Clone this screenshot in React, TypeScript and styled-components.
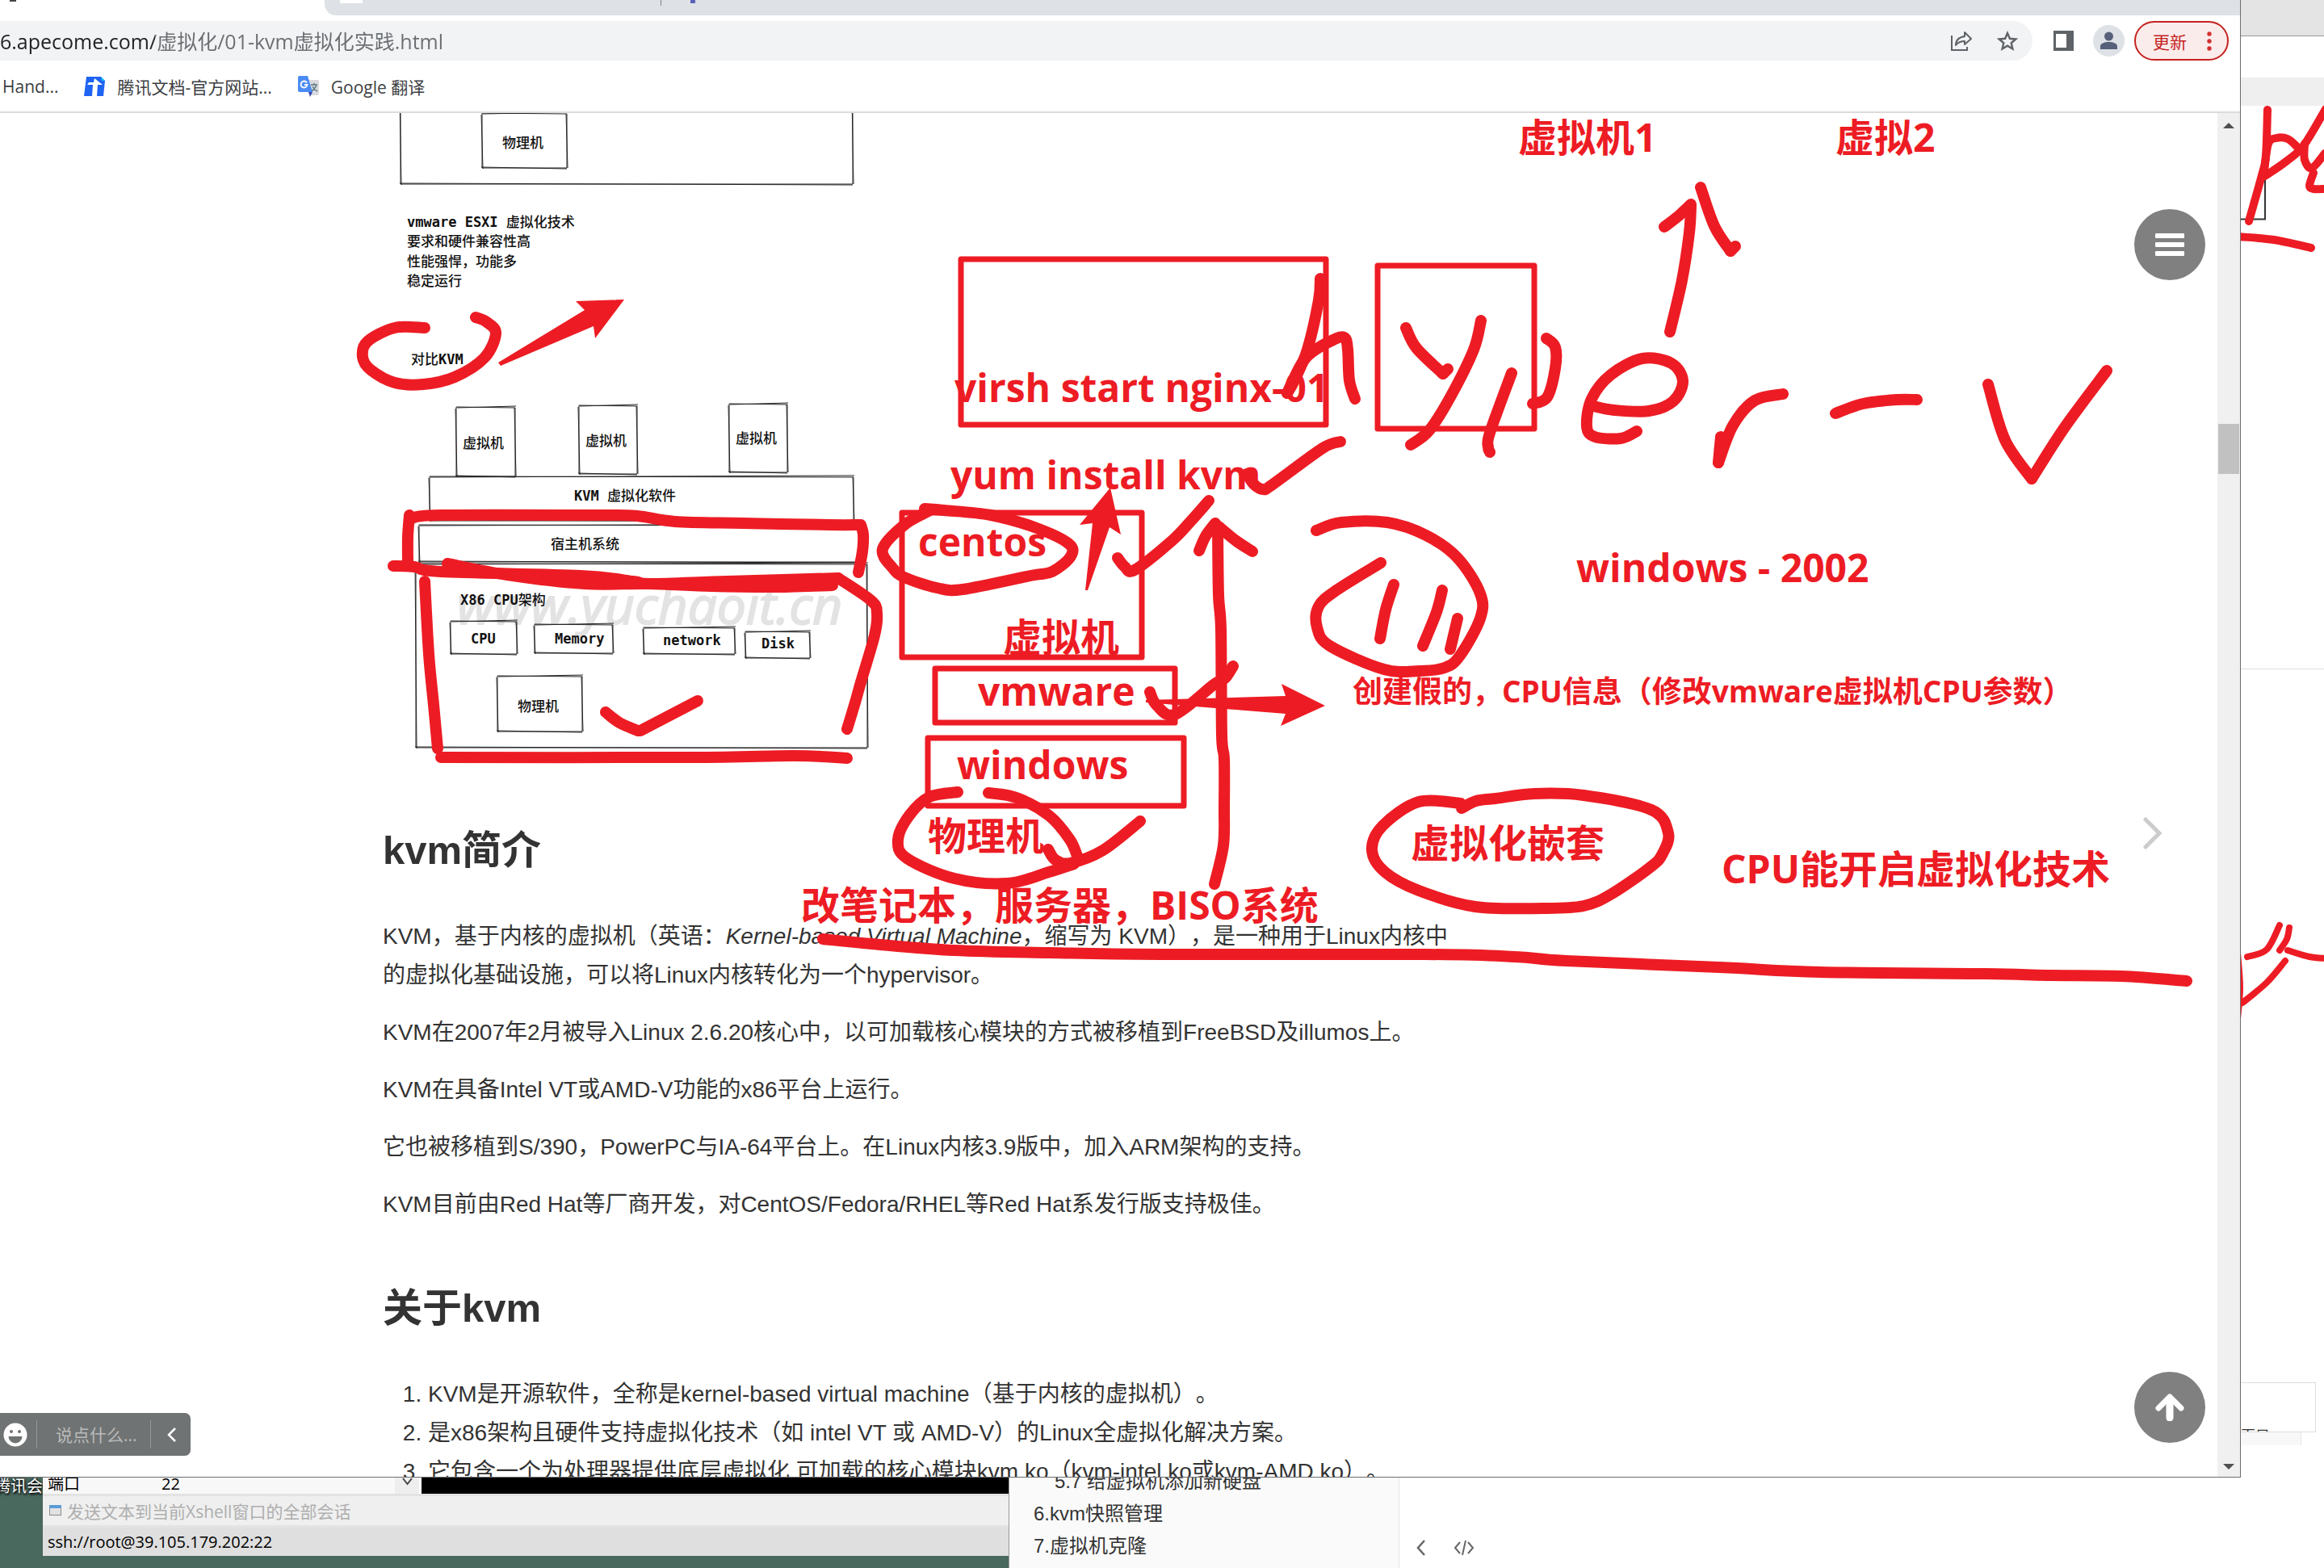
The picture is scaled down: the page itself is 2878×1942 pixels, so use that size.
import React from 'react';
import styled, { createGlobalStyle } from 'styled-components';

const RED = '#ed1c24';
const UI_FONT = `"Open Sans", "Noto Sans CJK SC", sans-serif`;
const DOC_FONT = `"Liberation Sans", "Noto Sans CJK SC", sans-serif`;
const SKETCH_FONT = `"DejaVu Sans Mono", "Noto Sans CJK SC", monospace`;

const GlobalStyle = createGlobalStyle`
  * { box-sizing: border-box; }
  body { margin: 0; background: #49685e; text-spacing-trim: space-all; }
  button, input { font: inherit; color: inherit; border: 0; background: none; padding: 0; margin: 0; outline: none; }
  button { cursor: pointer; display: flex; align-items: center; justify-content: center; }
  svg { display: block; flex: none; }
`;

/* ---------- desktop ---------- */

const Desktop = styled.div`
  display: flex;
  flex-direction: column;
  height: 100vh;
  overflow: hidden;
  font-family: ${UI_FONT};
`;

const UpperRow = styled.div`
  display: flex;
  flex: 1;
  min-height: 0;
`;

const Browser = styled.main`
  display: flex;
  flex-direction: column;
  flex: 1;
  min-width: 0;
  background: #fff;
  border-right: 1px solid #6b6d70;
  border-bottom: 1px solid #6b6d70;
`;

/* ---------- tab strip, toolbar, bookmarks ---------- */

const TabStrip = styled.div`
  display: flex;
  align-items: flex-start;
  height: 19px;
  padding-left: 12px;
  overflow: hidden;
  flex: none;
`;

const ActiveIcon = styled.span`
  width: 8px;
  height: 2px;
  margin-right: 382px;
  background: #444;
`;

const InactiveTabs = styled.div`
  display: flex;
  align-items: flex-start;
  flex: 1;
  height: 19px;
  padding-left: 19px;
  background: #dee1e6;
  border-bottom-left-radius: 14px;
`;

const Favicon = styled.span<{ $width: number; $color: string }>`
  width: ${(p) => p.$width}px;
  height: 4px;
  background: ${(p) => p.$color};
`;

const TabDivider = styled.span`
  width: 1px;
  height: 7px;
  margin: 0 36px 0 369px;
  background: #80848a;
`;

const Toolbar = styled.div`
  display: flex;
  align-items: center;
  height: 63px;
  padding-right: 14px;
  flex: none;
`;

const Omnibox = styled.div`
  display: flex;
  align-items: center;
  gap: 30px;
  flex: 1;
  height: 49px;
  padding-right: 18px;
  background: #f1f3f4;
  border-radius: 0 25px 25px 0;
  color: #5f6368;
`;

const UrlInput = styled.input`
  flex: 1;
  min-width: 0;
  height: 49px;
  padding-bottom: 2px;
  font-size: 25px;
  background: linear-gradient(90deg, #202124 192px, #6a6d71 192px);
  background-clip: text;
  -webkit-background-clip: text;
  color: transparent;
`;

const ToolbarButton = styled.button<{ $gap: number }>`
  margin-left: ${(p) => p.$gap}px;
  color: #5f6368;
`;

const UpdateButton = styled.button`
  justify-content: flex-start;
  gap: 25px;
  width: 117px;
  height: 49px;
  margin-left: 12px;
  padding-left: 21px;
  border: 2px solid #c5221f;
  border-radius: 25px;
  background: #faeceb;
  color: #c5221f;
  font-size: 21px;
`;

const BookmarkBar = styled.nav`
  display: flex;
  align-items: center;
  height: 58px;
  padding: 0 0 6px 3px;
  border-bottom: 2px solid #dcdcdc;
  font-size: 21px;
  color: #3c4043;
  flex: none;
`;

const Bookmark = styled.a`
  display: flex;
  align-items: center;
  gap: 15px;
  margin-right: 32px;
  color: inherit;
  text-decoration: none;
`;

/* ---------- page ---------- */

const Viewport = styled.div`
  position: relative;
  display: flex;
  flex: 1;
  min-height: 0;
  overflow: hidden;
`;

const Page = styled.div`
  flex: 1;
  min-width: 0;
  padding-left: 474px;
  overflow: hidden;
`;

const Article = styled.article`
  max-width: 1342px;
  font-family: ${DOC_FONT};
  font-size: 28px;
  line-height: 48px;
  color: #333;

  h2 {
    margin: 62px 0 41px;
    font-size: 49px;
    line-height: 84px;
  }
  p { margin: 0 0 23px; }
  ol { margin: 0; padding-left: 56px; }
  li { white-space: nowrap; }
`;

const Scrollbar = styled.div`
  display: flex;
  flex-direction: column;
  align-items: center;
  width: 28px;
  padding: 12px 0 9px;
  background: #f0f0f0;
`;

const Thumb = styled.div`
  width: 26px;
  height: 62px;
  margin: 366px 0 auto;
  background: #c1c1c1;
`;

const Overlay = styled.svg`
  position: absolute;
  left: 0;
  top: 0;
  pointer-events: none;
`;

const RoundButton = styled.button<{ $edge: 'top' | 'bottom' }>`
  position: absolute;
  right: 43px;
  ${(p) => (p.$edge === 'top' ? 'top: 119px;' : 'bottom: 42px;')}
  width: 88px;
  height: 88px;
  border-radius: 50%;
  background: #808080;
`;

const NextButton = styled.button`
  position: absolute;
  right: 94px;
  top: 870px;
`;

const CommentBox = styled.form`
  position: absolute;
  left: 0;
  bottom: 26px;
  display: flex;
  align-items: center;
  width: 236px;
  height: 53px;
  padding-left: 4px;
  border-radius: 0 7px 7px 0;
  background: #707373;
  color: #b9bbbb;
  font-size: 21px;

  input { width: 117px; }
  input::placeholder { color: #b9bbbb; opacity: 1; }
`;

const CommentDivider = styled.span<{ $before: number; $after: number }>`
  width: 1px;
  height: 35px;
  margin: 0 ${(p) => p.$after}px 0 ${(p) => p.$before}px;
  background: #969898;
`;

/* ---------- window behind, right edge ---------- */

const BackWindow = styled.aside`
  position: relative;
  display: flex;
  flex-direction: column;
  width: 103px;
  background: #fff;
  overflow: hidden;
`;

const BackTitle = styled.div`
  height: 45px;
  background: #e4e4e4;
  border-bottom: 1px solid #999;
  flex: none;
`;

const BackTools = styled.div`
  height: 86px;
  border-bottom: 35px solid #efefef;
  flex: none;
`;

const BackPage = styled.div`
  height: 698px;
  border-bottom: 1px solid #ddd;
  flex: none;
`;

const BackPanel = styled.div`
  width: 93px;
  height: 62px;
  margin-top: auto;
  padding-top: 54px;
  overflow: hidden;
  border: 1px solid #ddd;
  border-left: 0;
  font-size: 18px;
  line-height: 22px;
  color: #333;
  flex: none;
`;

const BackFooter = styled.div`
  width: 75px;
  height: 16px;
  margin-bottom: 40px;
  background: #f8f8f8;
  border-right: 1px solid #e5e5e5;
  flex: none;
`;

/* ---------- bottom row ---------- */

const LowerRow = styled.div`
  display: flex;
  height: 112px;
  overflow: hidden;
  flex: none;
`;

const DesktopLabel = styled.div`
  display: flex;
  justify-content: flex-end;
  width: 53px;
  overflow: hidden;
  font-size: 20px;
  line-height: 22px;
  color: #fff;
  white-space: nowrap;
  text-shadow: 1px 2px 3px #000, 0 0 3px #000;
`;

const Terminal = styled.section`
  display: flex;
  flex-direction: column;
  width: 1196px;
  padding-bottom: 15px;
  font-size: 20px;
  background: #49685e;
`;

const SessionRow = styled.div`
  display: flex;
  height: 20px;
  line-height: 16px;
  background: #000;
  color: #000;
`;

const SessionField = styled.div`
  display: flex;
  width: 436px;
  padding-left: 6px;
  background: #f8f8f8;

  dl { display: flex; margin: 0; }
  dt { width: 141px; }
  dd { margin: 0; }
`;

const SessionScroll = styled.div`
  display: flex;
  justify-content: center;
  width: 33px;
  background: #eee;
  border-right: 3px solid #fff;
`;

const SendRow = styled.label`
  display: flex;
  align-items: center;
  gap: 7px;
  height: 43px;
  padding-left: 8px;
  background: #efefef;
  border: solid #e3e3e3;
  border-width: 3px 0;
  font-size: 21px;

  input { flex: 1; padding-top: 2px; }
  input::placeholder { color: #aeaeae; opacity: 1; }
`;

const StatusRow = styled.div`
  flex: 1;
  padding-left: 6px;
  line-height: 35px;
  background: #dfdfdf;
  color: #000;
`;

const Contents = styled.nav`
  display: flex;
  flex-direction: column;
  justify-content: flex-end;
  width: 484px;
  padding: 0 0 7px 30px;
  background: #fafafa;
  border-left: 1px solid #999;
  border-right: 1px solid #e6e6e6;
  font-family: ${DOC_FONT};
  font-size: 24px;
  line-height: 40px;
`;

const ContentsLink = styled.a<{ $nested?: boolean }>`
  padding-left: ${(p) => (p.$nested ? 26 : 0)}px;
  color: #333;
  text-decoration: none;
  flex: none;
`;

const BackArticle = styled.div`
  display: flex;
  flex: 1;
  align-items: flex-end;
  gap: 34px;
  padding: 0 0 14px 21px;
  background: #fff;
`;

/* ---------- hand-drawn diagram ---------- */

type Box = [number, number, number, number];

const sketchBoxes: Box[] = [
  [496, 120, 1056, 228],
  [597, 140, 702, 208],
  [565, 504, 638, 590],
  [717, 502, 789, 587],
  [903, 500, 975, 585],
  [532, 590, 1057, 645],
  [519, 650, 1071, 696],
  [515, 698, 1074, 926],
  [558, 769, 640, 810],
  [662, 773, 759, 809],
  [797, 777, 910, 810],
  [923, 782, 1003, 815],
  [616, 837, 721, 906],
];

const sketchTexts: [number, number, string][] = [
  [622, 183, '物理机'],
  [504, 281, 'vmware ESXI 虚拟化技术'],
  [504, 305, '要求和硬件兼容性高'],
  [504, 330, '性能强悍，功能多'],
  [504, 354, '稳定运行'],
  [509, 451, '对比KVM'],
  [573, 555, '虚拟机'],
  [725, 552, '虚拟机'],
  [911, 549, '虚拟机'],
  [711, 620, 'KVM 虚拟化软件'],
  [682, 680, '宿主机系统'],
  [570, 749, 'X86 CPU架构'],
  [583, 797, 'CPU'],
  [687, 797, 'Memory'],
  [821, 799, 'network'],
  [943, 803, 'Disk'],
  [641, 881, '物理机'],
];

const SketchText = styled.text`
  font-family: ${SKETCH_FONT};
  font-size: 17px;
  font-weight: 500;
  fill: #111;
  white-space: pre;
`;

const Latin = styled.tspan`
  font-weight: 700;
`;

const Watermark = styled.text`
  font-family: "Open Sans", sans-serif;
  font-style: italic;
  font-size: 64px;
  fill: #e3e3e3;
  stroke: #e3e3e3;
  stroke-width: 2px;
`;

function SketchBox({ box: [l, t, r, b] }: { box: Box }) {
  return (
    <path
      d={`M${l} ${t}L${r} ${t + 1}L${r} ${b}L${l} ${b}ZM${l + 1} ${t + 1}L${r + 1} ${t - 1}M${l - 1} ${b - 1}L${r} ${b + 1}M${l + 1} ${b + 1}L${l - 1} ${t + 2}M${r - 1} ${t + 1}L${r + 1} ${b}`}
    />
  );
}

function Diagram() {
  return (
    <svg width="640" height="809" viewBox="474 140 640 809" role="img" aria-label="KVM">
      <Watermark x="566" y="773">www.yuchaoit.cn</Watermark>
      <g fill="none" stroke="#222" strokeWidth="1">
        {sketchBoxes.map((box) => (
          <SketchBox key={box.join()} box={box} />
        ))}
      </g>
      {sketchTexts.map(([x, y, text]) => (
        <SketchText key={`${x}-${y}`} x={x} y={y}>
          {text.split(/([\x20-\x7e]+)/).map((run, i) =>
            i % 2 ? <Latin key={i}>{run}</Latin> : run,
          )}
        </SketchText>
      ))}
    </svg>
  );
}

/* ---------- red pen ---------- */

type Point = [number, number];

/* Smooth curve through every point of a pen stroke. */
function curve(p: Point[]): string {
  let d = `M${p[0][0]} ${p[0][1]}`;
  for (let i = 0; i < p.length - 1; i++) {
    const a = p[i - 1] ?? p[i];
    const b = p[i];
    const c = p[i + 1];
    const e = p[i + 2] ?? c;
    d += `C${b[0] + (c[0] - a[0]) / 6} ${b[1] + (c[1] - a[1]) / 6} ${c[0] - (e[0] - b[0]) / 6} ${c[1] - (e[1] - b[1]) / 6} ${c[0]} ${c[1]}`;
  }
  return d;
}

const penStrokes: Point[][] = [
  [[526, 406], [489, 406], [455, 423], [449, 442], [459, 458], [489, 474], [524, 476], [563, 467], [600, 443], [614, 413], [603, 399], [589, 393]],
  [[507, 638], [505, 665], [505, 696]],
  [[509, 642], [546, 638], [741, 638], [789, 639], [836, 646], [919, 648], [1027, 650], [1064, 650]],
  [[1066, 650], [1069, 662], [1068, 683], [1063, 709]],
  [[487, 701], [513, 702], [546, 708], [719, 713], [784, 720], [806, 723], [901, 720], [1038, 716]],
  [[1038, 716], [1079, 744], [1086, 760], [1083, 787], [1066, 845], [1059, 870], [1049, 903]],
  [[554, 698], [628, 712], [724, 723], [802, 723], [880, 726], [962, 727], [1031, 725]],
  [[526, 720], [531, 810], [537, 873], [542, 927]],
  [[546, 938], [854, 938], [984, 936], [1049, 939]],
  [[750, 882], [767, 895], [790, 905]],
  [[793, 905], [864, 868]],
  [[1145, 630], [1169, 632], [1227, 638], [1281, 653], [1323, 673], [1326, 689], [1303, 708], [1276, 713], [1192, 730], [1160, 728], [1120, 715], [1105, 703], [1093, 680], [1120, 650], [1150, 633]],
  [[1544, 587], [1553, 600], [1564, 606], [1576, 600], [1638, 555], [1660, 547]],
  [[1384, 691], [1393, 702], [1405, 706], [1451, 670], [1475, 645], [1497, 620]],
  [[1508, 654], [1509, 737], [1512, 780], [1513, 910], [1516, 940], [1516, 1000], [1515, 1047], [1504, 1095]],
  [[1485, 682], [1493, 664], [1505, 648]],
  [[1509, 652], [1531, 670], [1551, 683]],
  [[1635, 345], [1633, 372], [1619, 433], [1603, 471], [1594, 487]],
  [[1594, 487], [1611, 452], [1625, 436], [1651, 421], [1665, 418], [1669, 433], [1671, 471], [1678, 494]],
  [[1741, 406], [1754, 431], [1787, 463]],
  [[1787, 463], [1793, 457]],
  [[1834, 397], [1825, 433], [1797, 490], [1770, 533], [1747, 551]],
  [[1872, 462], [1845, 536], [1843, 554], [1845, 560]],
  [[1915, 419], [1926, 430], [1926, 456], [1916, 492], [1898, 500]],
  [[1973, 503], [1999, 508], [2042, 509], [2072, 497], [2084, 472], [2070, 450], [2034, 444], [1995, 464], [1971, 494], [1965, 528], [1975, 541], [2007, 543], [2027, 534]],
  [[2094, 255], [2092, 288], [2083, 347], [2068, 411]],
  [[2061, 281], [2078, 268], [2094, 253]],
  [[2106, 232], [2123, 280], [2143, 311]],
  [[2143, 311], [2149, 305]],
  [[2131, 541], [2128, 573]],
  [[2128, 573], [2146, 527], [2173, 496], [2208, 488]],
  [[2273, 512], [2307, 500], [2349, 495], [2374, 495]],
  [[2462, 476], [2483, 545], [2516, 593]],
  [[2516, 593], [2557, 529], [2609, 459]],
  [[1630, 657], [1661, 647], [1718, 647], [1766, 663], [1805, 691], [1833, 735], [1833, 766], [1808, 812], [1789, 827], [1758, 831], [1714, 829], [1647, 800], [1631, 777], [1633, 751], [1655, 731], [1710, 697]],
  [[1726, 724], [1716, 755], [1709, 791]],
  [[1786, 731], [1779, 758], [1762, 800]],
  [[1805, 766], [1796, 804]],
  [[1424, 857], [1432, 873], [1455, 885], [1503, 848], [1517, 840], [1527, 825]],
  [[1186, 981], [1151, 987], [1126, 1010], [1112, 1040], [1123, 1063], [1182, 1088], [1248, 1094], [1299, 1080], [1330, 1070]],
  [[1224, 982], [1259, 988], [1299, 1010], [1325, 1040], [1335, 1063]],
  [[1298, 1052], [1307, 1065], [1325, 1069], [1366, 1053], [1412, 1017]],
  [[1810, 1001], [1828, 992], [1852, 989], [1900, 983], [1961, 985], [2045, 1003], [2066, 1032], [2059, 1057], [2045, 1073], [1996, 1107], [1961, 1122], [1911, 1125], [1827, 1123], [1757, 1103], [1715, 1080], [1699, 1053], [1712, 1023], [1757, 993], [1809, 995]],
  [[1019, 1163], [1080, 1169], [1182, 1177], [1300, 1180], [1437, 1182], [1764, 1182], [1876, 1185], [1940, 1190], [2129, 1198], [2255, 1204], [2459, 1206], [2536, 1208], [2627, 1209], [2708, 1215]],
];

const penBoxes: Box[] = [
  [1190, 321, 1642, 526],
  [1117, 635, 1414, 814],
  [1158, 828, 1455, 895],
  [1149, 914, 1466, 998],
  [1706, 329, 1900, 531],
];

const penArrows = [
  '773,371 713,373 724,384 617,449 620,453 735,404 737,419',
  '1375,604 1337,650 1353,648 1344,731 1347,731 1374,653 1388,662',
  '1641,874 1587,847 1592,862 1419,867 1419,870 1592,884 1586,899',
];

const penNotes: { x: number; y: number; text: string; small?: boolean }[] = [
  { x: 1880, y: 188, text: '虚拟机1' },
  { x: 2273, y: 188, text: '虚拟2' },
  { x: 1182, y: 498, text: 'virsh start nginx-01' },
  { x: 1177, y: 606, text: 'yum install kvm' },
  { x: 1137, y: 689, text: 'centos' },
  { x: 1242, y: 807, text: '虚拟机' },
  { x: 1211, y: 874, text: 'vmware' },
  { x: 1185, y: 965, text: 'windows' },
  { x: 1149, y: 1053, text: '物理机' },
  { x: 992, y: 1139, text: '改笔记本，服务器，BISO系统' },
  { x: 1952, y: 721, text: 'windows - 2002' },
  { x: 1675, y: 870, text: '创建假的，CPU信息（修改vmware虚拟机CPU参数）', small: true },
  { x: 1747, y: 1062, text: '虚拟化嵌套' },
  { x: 2132, y: 1094, text: 'CPU能开启虚拟化技术' },
];

const Note = styled.text<{ $small?: boolean }>`
  font-family: ${UI_FONT};
  font-weight: 700;
  font-size: ${(p) => (p.$small ? 37 : 48)}px;
  fill: ${RED};
`;

function RedPen() {
  return (
    <Overlay width="2746" height="1689" viewBox="0 140 2746 1689">
      {penNotes.map((n) => (
        <Note key={n.text + n.y} x={n.x} y={n.y} $small={n.small}>
          {n.text}
        </Note>
      ))}
      <g fill="none" stroke={RED} strokeLinecap="round" strokeLinejoin="round">
        {penBoxes.map(([l, t, r, b]) => (
          <rect key={`${l}-${t}`} x={l} y={t} width={r - l} height={b - t} strokeWidth="7" />
        ))}
        {penStrokes.map((s, i) => (
          <path key={i} d={curve(s)} strokeWidth="14" />
        ))}
      </g>
      {penArrows.map((a) => (
        <polygon key={a} points={a} fill={RED} />
      ))}
    </Overlay>
  );
}

const backStrokes: Point[][] = [
  [[33, 136], [31, 193], [26, 217], [10, 274]],
  [[30, 218], [56, 200], [78, 180], [105, 135]],
  [[29, 212], [34, 178], [44, 171], [58, 172], [70, 182]],
  [[79, 178], [79, 198], [88, 208], [104, 190]],
  [[90, 214], [85, 230], [90, 234], [105, 234]],
  [[-4, 293], [41, 297], [87, 307]],
];

const backThinStrokes: Point[][] = [
  [[8, 1185], [32, 1176], [48, 1146]],
  [[60, 1149], [57, 1163], [48, 1177]],
  [[58, 1177], [85, 1185], [105, 1187]],
  [[2, 1242], [32, 1217], [55, 1190]],
  [[-4, 1180], [-1, 1223], [-4, 1262]],
];

function BackPen() {
  return (
    <Overlay width="103" height="1400" viewBox="0 0 103 1400">
      <path d="M0 271.500H30V190" fill="none" stroke="#333" strokeWidth="2" />
      <g fill="none" stroke={RED} strokeLinecap="round" strokeLinejoin="round">
        {backStrokes.map((s, i) => (
          <path key={i} d={curve(s)} strokeWidth="10" />
        ))}
        {backThinStrokes.map((s, i) => (
          <path key={i} d={curve(s)} strokeWidth="8" />
        ))}
      </g>
    </Overlay>
  );
}

/* ---------- icons ---------- */

const ShareIcon = () => (
  <svg width="27" height="26" viewBox="0 0 27 26" fill="none" stroke="currentColor" strokeWidth="2">
    <path d="M1 6V24H20V20" />
    <path d="M17 2V7C10 8 6 12 6 18C9 14 12 13 17 13V17L25 10Z" strokeLinejoin="round" />
  </svg>
);

const StarIcon = () => (
  <svg width="26" height="26" viewBox="0 0 26 26" fill="none" stroke="currentColor" strokeWidth="2.400">
    <path d="M13 3L15.900 9.800L23.300 10.500L17.700 15.300L19.400 22.500L13 18.700L6.600 22.500L8.300 15.300L2.700 10.500L10.100 9.800Z" />
  </svg>
);

const PanelIcon = () => (
  <svg width="25" height="25" viewBox="0 0 25 25">
    <path fill="currentColor" fillRule="evenodd" d="M0 0H25V25H0ZM3 4V21H16V4Z" />
  </svg>
);

const AvatarIcon = () => (
  <svg width="39" height="39" viewBox="0 0 39 39">
    <circle cx="19.500" cy="19.500" r="19.500" fill="#dee1e6" />
    <circle cx="19.500" cy="14" r="5.500" fill="#56607a" />
    <path d="M9 30V26C9 23 14 21 19.500 21S30 23 30 26V30Z" fill="#56607a" />
  </svg>
);

const DotsIcon = () => (
  <svg width="6" height="24" viewBox="0 0 6 24" fill="#d32f2f">
    <circle cx="3" cy="3" r="2.700" />
    <circle cx="3" cy="12" r="2.700" />
    <circle cx="3" cy="21" r="2.700" />
  </svg>
);

const DocsIcon = () => (
  <svg width="26" height="24" viewBox="0 0 26 24">
    <path d="M3 0H21L26 5L24 24H0Z" fill="#1f63f2" />
    <path d="M21 0L26 5H22Z" fill="#16c8f5" />
    <path d="M13 2L23 10H17L16 24H10L11 10H4L6 7H12Z" fill="#fff" />
  </svg>
);

const TranslateIcon = () => (
  <svg width="26" height="26" viewBox="0 0 26 26">
    <path d="M11 5H24Q26 5 26 7V22Q26 24 24 24H15Z" fill="#d9dadd" />
    <path d="M16 11H24M20 9V11M23 11Q21 17 16 19M18 13Q20 17 24 19" fill="none" stroke="#5f7a86" strokeWidth="1.500" />
    <path d="M2 0H12L18 20H2Q0 20 0 18V2Q0 0 2 0Z" fill="#4b8bf5" />
    <path d="M13 20H18L15 26Z" fill="#3848b5" />
    <path d="M11 8.500A4 4 0 1 0 11.500 11H8" fill="none" stroke="#fff" strokeWidth="1.800" />
  </svg>
);

const MenuIcon = () => (
  <svg width="36" height="28" viewBox="0 0 36 28" fill="#fff">
    <rect width="36" height="6" rx="1" />
    <rect y="11" width="36" height="6" rx="1" />
    <rect y="22" width="36" height="6" rx="1" />
  </svg>
);

const UpIcon = () => (
  <svg width="40" height="34" viewBox="0 0 40 34" fill="none" stroke="#fff" strokeWidth="7">
    <path d="M20 30V8" strokeWidth="9" strokeLinecap="round" />
    <path d="M6 18L20 4L34 18" strokeLinecap="round" strokeLinejoin="round" />
  </svg>
);

const SmileIcon = () => (
  <svg width="30" height="30" viewBox="0 0 30 30">
    <circle cx="15" cy="15" r="14.500" fill="#fff" />
    <circle cx="10" cy="11" r="2" fill="#707373" />
    <circle cx="20" cy="11" r="2" fill="#707373" />
    <path d="M6.500 17H23.500A8.500 8.500 0 0 1 6.500 17Z" fill="#707373" />
  </svg>
);

const FormIcon = () => (
  <svg width="15" height="13" viewBox="0 0 15 13">
    <rect x="0.500" y="0.500" width="14" height="12" fill="#e2e2e2" stroke="#8a8a8a" />
    <rect width="15" height="4" fill="#5a9bd5" />
  </svg>
);

export default function App() {
  return (
    <Desktop>
      <GlobalStyle />
      <UpperRow>
        <Browser>
          <TabStrip>
            <ActiveIcon />
            <InactiveTabs>
              <Favicon $width={28} $color="#fff" />
              <TabDivider />
              <Favicon $width={6} $color="#5a62b8" />
            </InactiveTabs>
          </TabStrip>
          <Toolbar>
            <Omnibox>
              <UrlInput aria-label="地址" defaultValue="6.apecome.com/虚拟化/01-kvm虚拟化实践.html" />
              <button aria-label="分享"><ShareIcon /></button>
              <button aria-label="收藏"><StarIcon /></button>
            </Omnibox>
            <ToolbarButton $gap={26} aria-label="侧边栏"><PanelIcon /></ToolbarButton>
            <ToolbarButton $gap={24} aria-label="用户"><AvatarIcon /></ToolbarButton>
            <UpdateButton>更新<DotsIcon /></UpdateButton>
          </Toolbar>
          <BookmarkBar>
            <Bookmark href="#">Hand...</Bookmark>
            <Bookmark href="#"><DocsIcon />腾讯文档-官方网站...</Bookmark>
            <Bookmark href="#"><TranslateIcon />Google 翻译</Bookmark>
          </BookmarkBar>
          <Viewport>
            <Page>
              <Article>
                <Diagram />
                <h2>kvm简介</h2>
                <p>
                  KVM，基于内核的虚拟机（英语：<em>Kernel-based Virtual Machine</em>，缩写为 KVM），是一种用于Linux内核中的虚拟化基础设施，可以将Linux内核转化为一个hypervisor。
                </p>
                <p>KVM在2007年2月被导入Linux 2.6.20核心中，以可加载核心模块的方式被移植到FreeBSD及illumos上。</p>
                <p>KVM在具备Intel VT或AMD-V功能的x86平台上运行。</p>
                <p>它也被移植到S/390，PowerPC与IA-64平台上。在Linux内核3.9版中，加入ARM架构的支持。</p>
                <p>KVM目前由Red Hat等厂商开发，对CentOS/Fedora/RHEL等Red Hat系发行版支持极佳。</p>
                <h2>关于kvm</h2>
                <ol>
                  <li>KVM是开源软件，全称是kernel-based virtual machine（基于内核的虚拟机）。</li>
                  <li>是x86架构且硬件支持虚拟化技术（如 intel VT 或 AMD-V）的Linux全虚拟化解决方案。</li>
                  <li>它包含一个为处理器提供底层虚拟化,可加载的核心模块kvm.ko（kvm-intel.ko或kvm-AMD.ko）。</li>
                </ol>
              </Article>
            </Page>
            <Scrollbar>
              <svg width="14" height="7" viewBox="0 0 14 7"><path d="M7 0L14 7H0Z" fill="#505050" /></svg>
              <Thumb />
              <svg width="14" height="7" viewBox="0 0 14 7"><path d="M0 0H14L7 7Z" fill="#505050" /></svg>
            </Scrollbar>
            <RedPen />
            <RoundButton $edge="top" aria-label="目录"><MenuIcon /></RoundButton>
            <NextButton aria-label="下一页">
              <svg width="28" height="44" viewBox="0 0 28 44" fill="none" stroke="#ccc" strokeWidth="5" strokeLinecap="round">
                <path d="M5 5L22 22L5 39" />
              </svg>
            </NextButton>
            <RoundButton $edge="bottom" aria-label="返回顶部"><UpIcon /></RoundButton>
            <CommentBox>
              <SmileIcon />
              <CommentDivider $before={11} $after={23} />
              <input aria-label="评论" placeholder="说点什么..." />
              <CommentDivider $before={0} $after={20} />
              <button type="button" aria-label="收起">
                <svg width="12" height="18" viewBox="0 0 12 18" fill="none" stroke="#fff" strokeWidth="2.500">
                  <path d="M10 1L2 9L10 17" />
                </svg>
              </button>
            </CommentBox>
          </Viewport>
        </Browser>
        <BackWindow>
          <BackTitle />
          <BackTools />
          <BackPage />
          <BackPanel>页目</BackPanel>
          <BackFooter />
          <BackPen />
        </BackWindow>
      </UpperRow>
      <LowerRow>
        <DesktopLabel>腾讯会</DesktopLabel>
        <Terminal>
          <SessionRow>
            <SessionField>
              <dl>
                <dt>端口</dt>
                <dd>22</dd>
              </dl>
            </SessionField>
            <SessionScroll>
              <svg width="13" height="10" viewBox="0 0 13 10" fill="none" stroke="#444" strokeWidth="2">
                <path d="M1 1L6.500 8L12 1" />
              </svg>
            </SessionScroll>
          </SessionRow>
          <SendRow>
            <FormIcon />
            <input aria-label="发送文本" placeholder="发送文本到当前Xshell窗口的全部会话" />
          </SendRow>
          <StatusRow>ssh://root@39.105.179.202:22</StatusRow>
        </Terminal>
        <Contents>
          <ContentsLink href="#" $nested>5.7 给虚拟机添加新硬盘</ContentsLink>
          <ContentsLink href="#">6.kvm快照管理</ContentsLink>
          <ContentsLink href="#">7.虚拟机克隆</ContentsLink>
        </Contents>
        <BackArticle>
          <svg width="12" height="22" viewBox="0 0 12 22" fill="none" stroke="#666" strokeWidth="2.500">
            <path d="M10 2L2 11L10 20" />
          </svg>
          <svg width="26" height="22" viewBox="0 0 26 22" fill="none" stroke="#666" strokeWidth="2">
            <path d="M8 4L2 11L8 18M18 4L24 11L18 18M15 2L11 20" />
          </svg>
        </BackArticle>
      </LowerRow>
    </Desktop>
  );
}
